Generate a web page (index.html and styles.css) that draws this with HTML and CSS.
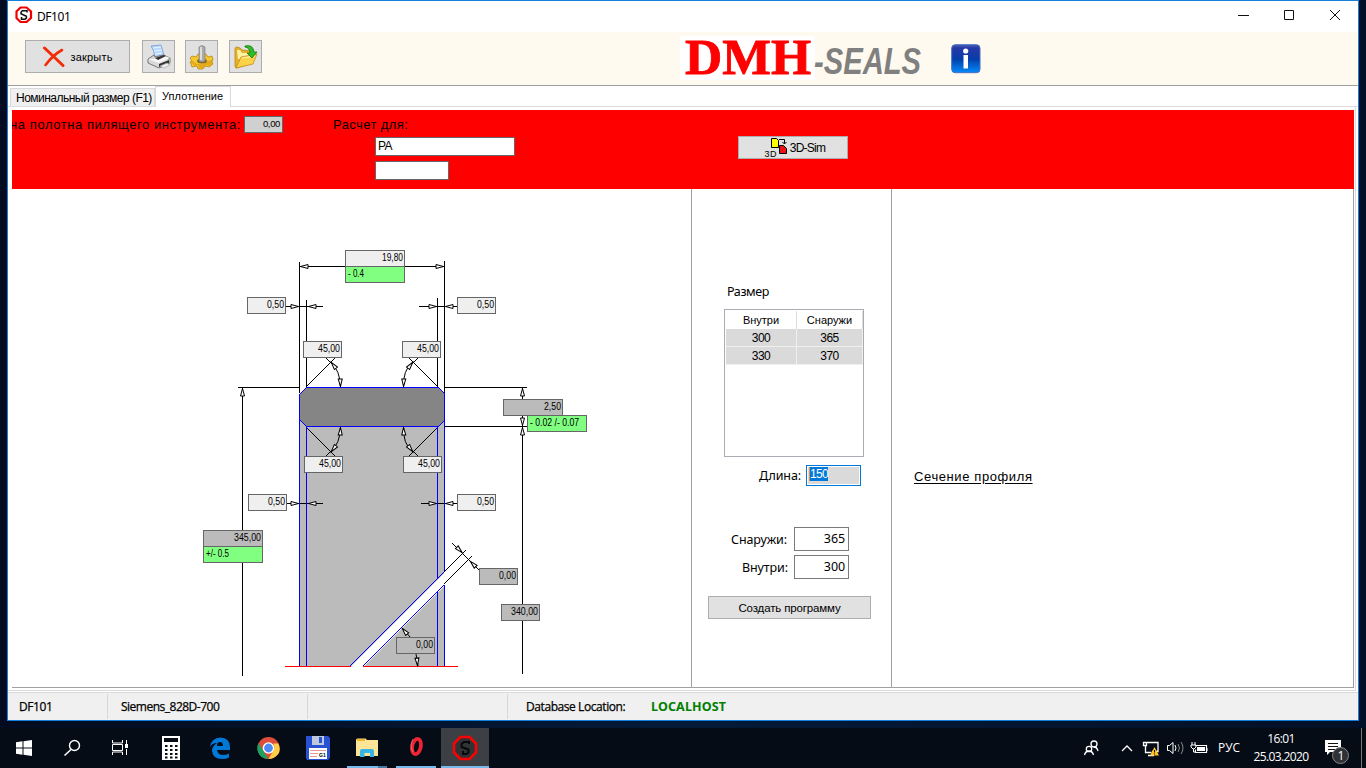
FILE: index.html
```html
<!DOCTYPE html>
<html lang="ru">
<head>
<meta charset="utf-8">
<title>DF101</title>
<link rel="stylesheet" href="styles.css">
</head>
<body>
<div class="window">
  <header class="titlebar">
    <svg class="app-icon" width="18" height="18" viewBox="0 0 18 18"><path d="M5.5 1.5h6l4.500 4v6.500l-4.500 4h-6l-4-4V5.500z" fill="#fff" stroke="#f00000" stroke-width="2.200"/><path d="M12 6.500V4.800H7.300L6 6.200v1.600l5.400 2.400v2L10 13.200H6.500V11" fill="none" stroke="#111" stroke-width="1.500"/></svg>
    <span class="title">DF101</span>
    <svg class="controls" width="110" height="20" viewBox="1232 6 110 20" fill="none" stroke="#111"><path d="M1238 15.500h11M1284.500 10.500h9v9h-9zM1330 10l10 10m0-10l-10 10"/></svg>
  </header>
  <div class="toolbar">
    <button class="btn close"><svg width="24" height="22" viewBox="0 0 24 22" fill="none" stroke="#f22b08" stroke-linecap="round"><path d="M2.500 2Q9 8 21 19.500" stroke-width="3"/><path d="M20 4Q11 9 3.500 19" stroke-width="2.600"/></svg><span>закрыть</span></button>
    <button class="btn tool t1"><svg width="26" height="26" viewBox="0 0 26 26"><path d="M5 2l10-1 3 10-9 2Q8 6 5 2z" fill="#b5d8ff" stroke="#8aa6d8"/><path d="M7 4l8-1M8 7l8-1M9 10l7-1" stroke="#e9f5ff"/><path d="M2 15l6-4 1 2 8-2 7 3v5l-11 5-11-5z" fill="#d9d9d9" stroke="#777"/><path d="M2 15l11 4 11-5-5-2-9 3z" fill="#f7f7f7"/><path d="M9 14l9-3 2 1-8 4zM13 20l10-4v3l-10 4z" fill="#333"/><path d="M14 22l7-3 3 2-6 3z" fill="#eee" stroke="#999" stroke-width=".6"/><path d="M22 15h1" stroke="#3d3"/></svg></button>
    <button class="btn tool t2"><svg width="26" height="26" viewBox="0 0 26 26"><path d="M3 12l4 1 2-3h8l2 3 4-1 1 4-2 1 2 3-4 3-4-1-2 3h-5l-1-3-5 1-1-3-1-2 2-1-2-3z" fill="#f5c82b" stroke="#b98915" stroke-width=".8"/><path d="M2 16v3l2 1 1 2 4-1 1 3h5l2-3 4 1 3-3v-3l-5 1-5 3H8z" fill="#dca01b" opacity=".75"/><ellipse cx="13" cy="17" rx="5" ry="2.500" fill="#8a6a20"/><path d="M10 3q3-3 6 0v14q-3 2-6 0z" fill="#aaa" stroke="#777" stroke-width=".6"/><path d="M12 3v13" stroke="#eee" stroke-width="1.500"/></svg></button>
    <button class="btn tool t3"><svg width="26" height="26" viewBox="0 0 26 26"><path d="M2 5q0-2 2-2l3 1 2 2 10 1v12L4 24q-2 0-2-2z" fill="#e5b12d" stroke="#b88712" stroke-width=".8"/><path d="M4 6h3l2 3 8 0v6H5z" fill="#fff2a1"/><path d="M8 13l16-3-4 10L3 24z" fill="#fbd34a" stroke="#c38f17" stroke-width=".8"/><path d="M9 14l13-2" stroke="#fff5b7"/><path d="M12 2q8-2 9 6h3l-5 6-5-5h3q0-5-5-6z" fill="#2dbd27" stroke="#147914" stroke-width=".8"/></svg></button>
    <svg class="logo" width="250" height="62" viewBox="680 26 250 62"><path d="M680 36h135v44H680z" fill="#fff"/><text x="685" y="74" class="dmh" textLength="126" lengthAdjust="spacingAndGlyphs">DMH</text><text x="814" y="74" class="seals" textLength="107" lengthAdjust="spacingAndGlyphs">-SEALS</text></svg>
    <svg class="info" width="30" height="30" viewBox="0 0 30 30"><defs><linearGradient id="blue" x2="0" y2="1"><stop stop-color="#4a5cb6"/><stop offset=".12" stop-color="#2638a5"/><stop offset=".48" stop-color="#0c3caa"/><stop offset=".5" stop-color="#003da8"/><stop offset="1" stop-color="#0789fa"/></linearGradient></defs><rect x=".7" y=".7" width="28.300" height="28" rx="3.500" fill="url(#blue)" stroke="#456fc0"/><path d="M12.500 11h4.500v13.500h-4.500z" fill="#fff"/><circle cx="14.700" cy="7" r="2.600" fill="#fff"/></svg>
  </div>
  <nav class="tabs"><span class="tab">Номинальный размер (F1)</span><span class="tab active">Уплотнение</span></nav>
  <main class="page">
    <section class="banner">
      <span class="blade">на полотна пилящего инструмента:</span>
      <span class="box blade-value">0,00</span>
      <div class="calc"><span class="calc-label">Расчет для:</span><span class="input material">PA</span><span class="input second"></span></div>
      <button class="btn sim"><svg width="25" height="20" viewBox="764 138 25 20"><path d="M771.500 138.500h5l2 2v7h-7z" fill="#ff0" stroke="#000"/><path d="M779.500 145.500h4l3 3v5h-7z" fill="#e11" stroke="#000"/><path d="M779 139.500h5.500v4m-2-1.500l2 2 2-2" fill="none" stroke="#000"/><text x="764.500" y="157" class="three" textLength="12">3D</text></svg><span>3D-Sim</span></button>
    </section>
    <div class="panels">
      <section class="drawing">
        <svg width="679" height="498" viewBox="12 189 679 498" shape-rendering="crispEdges">
          <defs>
            <path id="arr" d="M.5 0L8 -2V2z"/>
          </defs>
          <path d="M300 420l7 7h130l7-7v246H300z" fill="#bbb"/>
          <path d="M307 387h131l7 7v26l-7 7H307l-7-7v-26z" fill="#858585"/>
          <path d="M350 667L464 553l8 5-109 109z" fill="#fff"/>
          <g fill="none" stroke="#000">
            <path d="M299.500 262v131M306.500 300v87M444.500 261v132M437.500 298v89"/>
            <path d="M300 266.500h144M286 306.500h37M419 306.500h38M286 503.500h37M421 503.500h36"/>
            <path d="M238 387.500h62M445 387.500h82M444 426.500h83M242.500 388v288M522.500 388v286"/>
            <path d="M306 387l29-29M326 358l8 8M438 387l-29-29M418 358l-8 8M306 427l29 29M326 456l8-8M438 427l-29 29M418 456l-8-8" shape-rendering="auto"/>
            <path d="M331 363Q340 370 340.500 387M412 363Q403 370 403.500 387M331 451Q340 444 340.500 427M412 451Q403 444 403.500 427" shape-rendering="auto"/>
            <path d="M444 572l22-22M444 584l28-28M452 543l27 27M402 628l9 10M416 654l2 12" shape-rendering="auto"/>
          </g>
          <g fill="none" stroke="#00f">
            <path d="M307 387.500h131M307 426.500h131M299.500 394v26M444.500 394v26M299.500 420v246M306.500 427v239M444.500 420v151M437.500 427v151M444.500 585v81M437.500 592v74"/>
            <path d="M300 394l7-7M438 387l7 7M300 420l7 7M438 427l7-7M350 666l94-94M363 666l81-81" shape-rendering="auto"/>
          </g>
          <path d="M285 666.500h66M363 666.500h95" stroke="#f00" fill="none"/>
          <g fill="#fff" stroke="#000" shape-rendering="auto">
            <use href="#arr" x="300" y="266.500"/>
            <use href="#arr" transform="translate(444 266.500) rotate(180)"/>
            <use href="#arr" transform="translate(299 306.500) rotate(180)"/>
            <use href="#arr" transform="translate(308 306.500)"/>
            <use href="#arr" transform="translate(437 306.500) rotate(180)"/>
            <use href="#arr" transform="translate(445 306.500)"/>
            <use href="#arr" transform="translate(299 503.500) rotate(180)"/>
            <use href="#arr" transform="translate(308 503.500)"/>
            <use href="#arr" transform="translate(437 503.500) rotate(180)"/>
            <use href="#arr" transform="translate(445 503.500)"/>
            <use href="#arr" transform="translate(242.500 388) rotate(90)"/>
            <use href="#arr" transform="translate(522.500 388) rotate(90)"/>
            <use href="#arr" transform="translate(522.500 426) rotate(-90)"/>
            <use href="#arr" transform="translate(522.500 427) rotate(90)"/>
            <use href="#arr" transform="translate(340.500 387) rotate(-92)"/>
            <use href="#arr" transform="translate(331 362) rotate(52)"/>
            <use href="#arr" transform="translate(403.500 387) rotate(-88)"/>
            <use href="#arr" transform="translate(413 362) rotate(128)"/>
            <use href="#arr" transform="translate(340.500 427) rotate(92)"/>
            <use href="#arr" transform="translate(331 452) rotate(-52)"/>
            <use href="#arr" transform="translate(403.500 427) rotate(88)"/>
            <use href="#arr" transform="translate(413 452) rotate(-128)"/>
            <use href="#arr" transform="translate(462.500 553) rotate(-135)"/>
            <use href="#arr" transform="translate(470 561) rotate(45)"/>
            <use href="#arr" transform="translate(402 628) rotate(50)"/>
            <use href="#arr" transform="translate(417.500 666) rotate(-94)"/>
          </g>
          <g stroke="#666" fill="#efefef">
            <path d="M345.500 250.500h59v16h-59z"/><path d="M345.500 266.500h59v16h-59z" fill="#80ff80"/>
            <path d="M247.500 297.500h38v16h-38zM457.500 297.500h38v16h-38zM303.500 341.500h38v16h-38zM402.500 341.500h38v16h-38zM304.500 456.500h38v16h-38zM403.500 456.500h38v16h-38zM248.500 494.500h38v16h-38zM457.500 494.500h38v16h-38z"/>
            <path d="M503.500 399.500h59v16h-59zM203.500 530.500h59v16h-59zM479.500 568.500h38v16h-38zM501.500 604.500h38v16h-38zM396.500 637.500h38v16h-38z" fill="#bbb"/>
            <path d="M527.500 415.500h59v16h-59zM203.500 546.500h59v16h-59z" fill="#80ff80"/>
          </g>
          <g class="dims">
            <text x="382" y="261" textLength="21" lengthAdjust="spacingAndGlyphs">19,80</text><text x="348" y="277" textLength="16" lengthAdjust="spacingAndGlyphs">- 0.4</text>
            <text x="267" y="308" textLength="17" lengthAdjust="spacingAndGlyphs">0,50</text><text x="477" y="308" textLength="17" lengthAdjust="spacingAndGlyphs">0,50</text>
            <text x="318" y="352" textLength="22" lengthAdjust="spacingAndGlyphs">45,00</text><text x="417" y="352" textLength="22" lengthAdjust="spacingAndGlyphs">45,00</text>
            <text x="319" y="467" textLength="22" lengthAdjust="spacingAndGlyphs">45,00</text><text x="418" y="467" textLength="22" lengthAdjust="spacingAndGlyphs">45,00</text>
            <text x="268" y="505" textLength="17" lengthAdjust="spacingAndGlyphs">0,50</text><text x="477" y="505" textLength="17" lengthAdjust="spacingAndGlyphs">0,50</text>
            <text x="544" y="410" textLength="17" lengthAdjust="spacingAndGlyphs">2,50</text><text x="530" y="426" textLength="49" lengthAdjust="spacingAndGlyphs">- 0.02 /- 0.07</text>
            <text x="234" y="541" textLength="27" lengthAdjust="spacingAndGlyphs">345,00</text><text x="206" y="557" textLength="23" lengthAdjust="spacingAndGlyphs">+/- 0.5</text>
            <text x="499" y="579" textLength="17" lengthAdjust="spacingAndGlyphs">0,00</text><text x="511" y="615" textLength="27" lengthAdjust="spacingAndGlyphs">340,00</text>
            <text x="416" y="648" textLength="17" lengthAdjust="spacingAndGlyphs">0,00</text>
          </g>
        </svg>
      </section>
      <section class="form">
        <h2 class="form-title">Размер</h2>
        <div class="list">
          <div class="row head"><span>Внутри</span><span>Снаружи</span></div>
          <div class="row"><span>300</span><span>365</span></div>
          <div class="row"><span>330</span><span>370</span></div>
        </div>
        <div class="field length"><span>Длина:</span><span class="focus"><span class="focus-in"><span class="sel">150</span></span></span></div>
        <div class="field outer"><span>Снаружи:</span><span class="num">365</span></div>
        <div class="field inner"><span>Внутри:</span><span class="num">300</span></div>
        <button class="btn create">Создать программу</button>
      </section>
      <section class="profile"><span>Сечение профиля</span></section>
    </div>
  </main>
  <footer class="status"><span class="cell c1">DF101</span><span class="cell c2">Siemens_828D-700</span><span class="cell c3"></span><span class="cell c4">Database Location:</span><span class="host">LOCALHOST</span></footer>
</div>
<div class="taskbar">
  <svg class="apps" width="500" height="40" viewBox="0 728 500 40">
    <path d="M441 728h48v40h-48z" fill="#3c3f43"/>
    <path d="M16 742.300l6.500-1v6.200H16zM23.500 741.200l8.500-1.200v7.500h-8.500zM16 748.500h6.500v6.200l-6.500-1zM23.500 748.500H32v7.500l-8.500-1.200z" fill="#fff"/>
    <g fill="none" stroke="#fff"><circle cx="74.500" cy="745.500" r="5" stroke-width="1.400"/><path d="M71 749.500l-6.500 6" stroke-width="1.600"/><path d="M112.500 740v3h10v-3M112.500 755v-3h10v3M112.500 744.500h10v6h-10zM126.500 740v4M126.500 749v6"/></g><path d="M125 744h3v4h-3z" fill="#fff"/>
    <path d="M162 736h18v24h-18z" fill="#fff"/><path d="M164 738h14v4h-14z" fill="#070c14"/><path d="M165 746h13M165 750h13M165 754h13M165 757.500h13" stroke="#070c14" stroke-width="2" stroke-dasharray="2.500 2.500"/>
    <path d="M210 747q1-9 10.500-9.500Q230 738 230 747v3h-13q1 5 6 5 3 0 6-1.500v4q-3 1.500-7 1.500-9 0-10-8 0-5 5-8-5 0-7 4zM217 746h6q0-4-3-4t-3 4z" fill="#0078d7" fill-rule="evenodd"/>
    <circle cx="268.500" cy="748" r="11" fill="#de4c3c"/><path d="M258.500 743l6 10 4 6q-8 0-10.500-7-1.500-5 .5-9z" fill="#1ba261"/><path d="M268.500 759l4.800-8.500q2-3 0-7h5q3 6 0 10.500-4 5-9.800 5z" fill="#ffce44"/><circle cx="268.500" cy="748" r="5.800" fill="#fff"/><circle cx="268.500" cy="748" r="4.400" fill="#4c8bf5"/>
    <path d="M306 736h22l2 2v20l-2 2h-21l-1-2z" fill="#2951d4"/><path d="M312 736h12v9h-12z" fill="#bfc9dc"/><path d="M319 737h3v6h-3z" fill="#2951d4"/><path d="M309 748h18v11h-18z" fill="#fff"/><path d="M310 750.500h16M310 753.500h8M310 756.500h7" stroke="#e89797"/><text x="319" y="757" class="g1">G1</text>
    <path d="M356 740q0-1.500 1.500-1.500h8l1.500 1.500h11v16h-22z" fill="#fce596"/><path d="M357 739h8v2h-8z" fill="#f1b929"/><path d="M360 757v-6q0-2 2-2h10q2 0 2 2v6h-4v-4h-5.500v4z" fill="#38b4e5"/>
    <ellipse cx="416.500" cy="746.500" rx="4.300" ry="7.700" transform="rotate(12 416.500 746.500)" fill="none" stroke="#ee2432" stroke-width="3.700"/><path d="M413 739q-4 7 0 13" fill="none" stroke="#ff9ba0" stroke-width=".6"/>
    <path d="M460.500 737h9l6.500 6.500v9l-6.500 6.500h-9l-6.500-6.500v-9z" fill="#303336" stroke="#f00" stroke-width="2.500"/><path d="M469 744v-2h-5l-2.500 2v3l7 2.500v3l-2 1.500h-3.500v-3" fill="none" stroke="#080808" stroke-width="2"/>
    <path d="M347 766h31v2h-31zM396 766h40v2h-40zM441 766h48v2h-48z" fill="#76b9ed"/><path d="M378 766h9v2h-9z" fill="#4a7aa4"/>
  </svg>
  <svg class="tray" width="166" height="40" viewBox="1076 728 166 40" fill="none" stroke="#fff">
    <g stroke-width="1.300"><circle cx="1094" cy="744" r="3"/><circle cx="1089" cy="749" r="2.700"/><path d="M1094 747q3 0 4 4M1084.500 755q1-4 4.500-4t4.500 4"/></g>
    <path d="M1122 751l5-5 5 5" stroke-width="1.300"/>
    <path d="M1143.500 742.500h3v3h-3zM1147 742.500h11v9h-6M1145.500 746v6.500h6M1148 755.500h6" stroke-width="1.300"/><path d="M1154.500 747l4.500 8.500h-9z" fill="#fdc323" stroke="none"/><path d="M1154.500 750v2.500m0 1v1" stroke="#111"/>
    <path d="M1167.500 745.500h2l3.500-3v11l-3.500-3h-2z"/><path d="M1175 745q2 3 0 6"/><path d="M1178 744q3 4 0 8M1181 742q4 6 0 12" stroke="#888"/>
    <path d="M1195.500 745.500h11v7h-11v-3" stroke-width="1.200"/><path d="M1197 747h8v4h-8z" fill="#fff" stroke="none"/><path d="M1207 748v3M1192 742v3m3-3v3m-4 0h5v2l-2 2h-1l-2-2zm2.500 4v3h2"/>
    <text x="1218" y="752" class="lang" textLength="22" lengthAdjust="spacingAndGlyphs">РУС</text>
  </svg>
  <div class="clock"><span>16:01</span><span>25.03.2020</span></div>
  <svg class="notify" width="46" height="40" viewBox="1320 728 46 40"><path d="M1325 740h16v12h-11l-3 3v-3h-2z" fill="#fff"/><path d="M1328 743.500h10M1328 746.500h10M1328 749.500h7" stroke="#111"/><circle cx="1340.500" cy="755.500" r="8" fill="#303236" stroke="#888"/><text x="1337.500" y="760" class="badge">1</text><path d="M1361.500 728v40" stroke="#777"/></svg>
</div>
</body>
</html>
```
FILE: styles.css
```css
* { box-sizing: border-box; }
body {
  margin: 0; width: 1366px; height: 768px; overflow: hidden;
  background: linear-gradient(90deg, #020b20, #021a38 50%, #021027);
  font: 11px "Liberation Sans", Arial, sans-serif; color: #000;
  display: flex; flex-direction: column;
}
.window {
  width: 1352px; height: 721px; margin-left: 7px; flex: none;
  border: 1px solid #1580dc; background: #fff;
  display: flex; flex-direction: column;
}
.titlebar { height: 31px; display: flex; align-items: center; padding: 0 16px 1px 7px; flex: none; }
.app-icon { margin-top: -2px; }
.title { font: 12px "Noto Sans", sans-serif; letter-spacing: -.45px; margin-left: 4px; }
.controls { margin-left: auto; }
.toolbar { height: 54px; flex: none; background: #fffaef; border-bottom: 1px solid #a0a0a0; display: flex; padding: 8px 0 0 17px; align-items: flex-start; }
.btn { display: flex; align-items: center; justify-content: center; padding: 0; background: #e1e1e1; border: 1px solid #adadad; font: 11px "Liberation Sans", sans-serif; color: #000; }
.close { width: 105px; height: 33px; gap: 4px; }
.close span { letter-spacing: .2px; }
.tool { width: 33px; height: 33px; }
.t1 { margin-left: 12px; }
.t2 { margin-left: 10px; }
.t3 { margin-left: 11px; }
.logo { margin: -14px 0 -10px 418px; }
.info { margin: 4px 0 0 21px; }
.dmh { font: bold 50px "Liberation Serif", serif; fill: #f00; stroke: #f00; stroke-width: .8px; }
.seals { font: italic bold 37px "Liberation Sans", sans-serif; fill: #808080; }
.tabs { height: 21px; flex: none; display: flex; align-items: flex-end; padding-left: 2px; border-bottom: 1px solid #dcdcdc; }
.tab { height: 18px; width: 145px; border: 1px solid #d9d9d9; border-bottom: 0; background: #f0f0f0; font-size: 12px; line-height: 19px; padding-left: 5px; white-space: nowrap; letter-spacing: -.52px; }
.tab.active { width: 76px; height: 21px; margin-bottom: -1px; background: #fff; font-size: 11px; padding-left: 6px; letter-spacing: .08px; line-height: 19px; }
.page { height: 584px; flex: none; margin-right: 2px; border-right: 1px solid #dcdcdc; border-bottom: 1px solid #dcdcdc; padding: 3px 1px 2px 4px; }
.banner { height: 79px; background: #f00; display: flex; align-items: flex-start; overflow: hidden; }
.blade { width: 229px; display: flex; justify-content: flex-end; overflow: hidden; white-space: nowrap; font-size: 13px; letter-spacing: .56px; line-height: 16px; padding-top: 7px; }
.box { border: 1px solid #666; background: #d0d0d0; text-align: right; }
.blade-value { width: 39px; height: 17px; margin: 6px 0 0 3px; font-size: 9.5px; letter-spacing: -.35px; line-height: 14px; padding-right: 2px; }
.calc { width: 182px; margin-left: 50px; padding-top: 7px; display: flex; flex-direction: column; align-items: flex-start; }
.calc-label { font-size: 13px; line-height: 16px; letter-spacing: .4px; }
.input { background: #fff; border: 1px solid #666; height: 19px; margin-left: 42px; font-size: 12px; line-height: 16px; padding-left: 2px; letter-spacing: -.6px; }
.material { width: 140px; margin-top: 4px; }
.second { width: 74px; margin-top: 5px; }
.sim { width: 110px; height: 23px; margin: 26px 0 0 223px; gap: 1px; }
.sim svg { margin-left: 3px; }
.sim span { font-size: 12px; letter-spacing: -.75px; }
.three { font: 9px "Liberation Sans", sans-serif; }
.panels { height: 499px; display: flex; border-bottom: 1px solid #a0a0a0; border-right: 1px solid #a0a0a0; }
.drawing { width: 679px; height: 498px; flex: none; }
.drawing svg { display: block; }
.dims { font: 10px "Liberation Sans", sans-serif; fill: #000; }
.form { width: 201px; flex: none; border-left: 1px solid #a0a0a0; border-right: 1px solid #a0a0a0; font-family: "Noto Sans", sans-serif; }
.form-title { font-size: 12.500px; font-weight: 400; line-height: 18px; margin: 94px 0 8px 35px; letter-spacing: -.4px; }
.list { width: 140px; height: 148px; margin-left: 32px; border: 1px solid #a9acb2; padding: 1px; font: 12px "Liberation Sans", sans-serif; }
.row { width: 137px; height: 18px; display: grid; grid-template-columns: 71px 66px; background: #dadada; border-bottom: 1px solid #f0f0f0; line-height: 18px; text-align: center; letter-spacing: -.5px; }
.row span { border-right: 1px solid #f0f0f0; }
.row.head { background: #fff; border: 0; font-size: 11px; line-height: 18px; letter-spacing: 0; }
.row.head span { border-color: #dcdcdc; }
.field { display: flex; justify-content: flex-end; align-items: center; font-size: 12.500px; letter-spacing: -.1px; }
.length { width: 169px; height: 21px; margin-top: 8px; gap: 5px; }
.focus { width: 55px; height: 21px; border: 1px solid #0078d7; padding: 1px; background: #fff; }
.focus-in { display: block; height: 17px; background: #dadada; padding-left: 1px; border: 0; }
.sel { display: block; width: 19px; height: 14px; background: #0078d7; color: #fff; border-left: 1px solid #f28c3b; font: 12px/14px "Liberation Sans", sans-serif; letter-spacing: -.7px; }
.outer, .inner { width: 157px; height: 24px; gap: 7px; }
.outer { margin-top: 41px; }
.inner { margin-top: 4px; gap: 6px; }
.num { width: 55px; height: 24px; border: 1px solid #7a7a7a; text-align: right; padding-right: 3px; line-height: 22px; letter-spacing: -.1px; }
.create { width: 163px; height: 23px; margin: 17px 0 0 16px; font-size: 11.500px; letter-spacing: -.15px; }
.profile { padding: 279px 0 0 22px; font-size: 13px; line-height: 17px; letter-spacing: .6px; }
.profile span { text-decoration: underline; text-underline-offset: 2px; }
.status { height: 28px; flex: none; margin-top: 1px; background: #f0f0f0; border-top: 1px solid #dadada; display: flex; font: 500 12px "Open Sans", sans-serif; line-height: 27px; letter-spacing: -.42px; }
.cell { border-right: 1px solid #d7d7d7; height: 25px; margin-top: 1px; line-height: 25px; white-space: nowrap; -webkit-text-stroke: .25px #000; }
.c1 { width: 100px; padding-left: 11px; }
.c2 { width: 200px; padding-left: 13px; letter-spacing: -.5px; }
.c3 { width: 200px; }
.c4 { width: 143px; padding-left: 18px; border: 0; }
.host { font: bold 12.5px/28px "Noto Sans", sans-serif; color: #008000; letter-spacing: .15px; }
.taskbar { height: 40px; margin-top: 7px; background: #060c15; display: flex; color: #fff; flex: none; }
.tray { margin-left: 576px; }
.g1 { font: bold 5px "Liberation Sans", sans-serif; }
.lang { font: 12px "Open Sans", sans-serif; fill: #fff; stroke: none; }
.clock { width: 78px; display: flex; flex-direction: column; align-items: center; padding-top: 2px; font: 12px "Open Sans", sans-serif; line-height: 18px; letter-spacing: -.6px; }
.badge { font: 12px "Open Sans", sans-serif; fill: #fff; }
```
